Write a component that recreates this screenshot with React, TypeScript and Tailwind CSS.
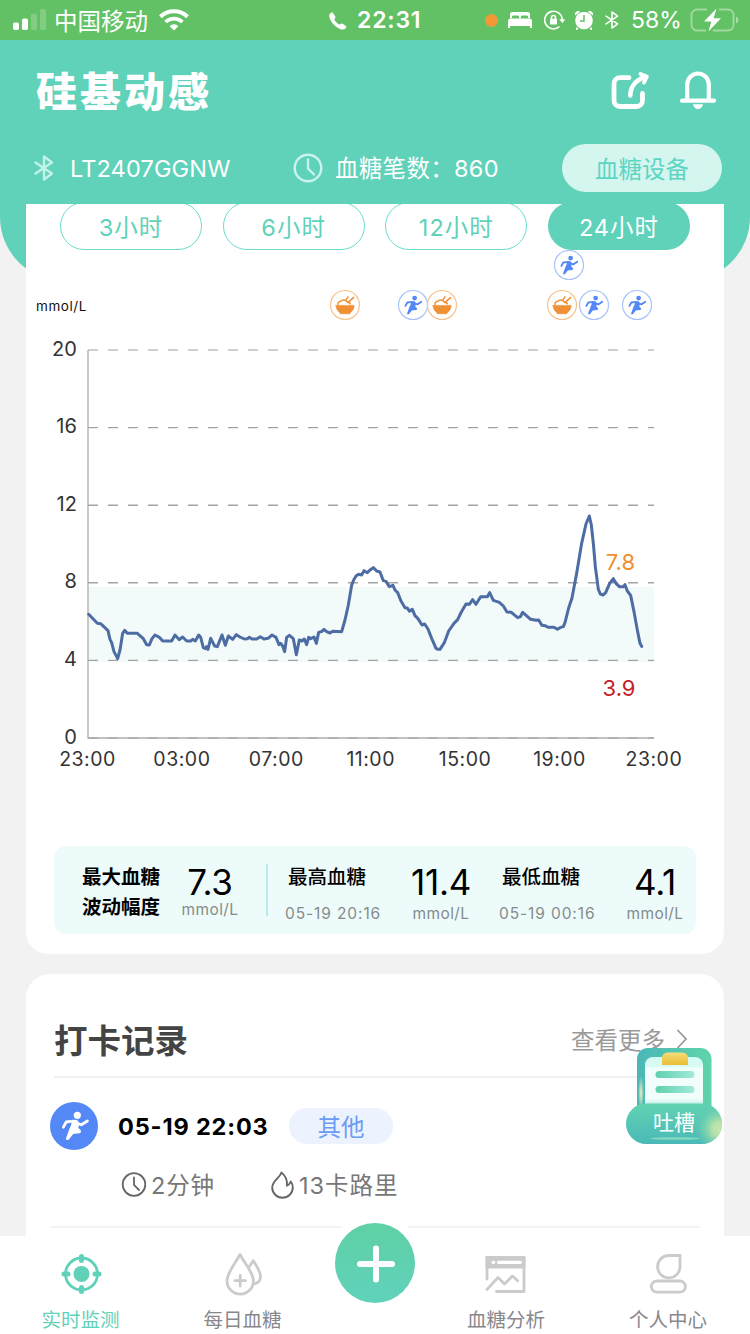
import type { ReactNode } from "react";

const RANGES = ["3小时", "6小时", "12小时", "24小时"];

const Y_TICKS = [20, 16, 12, 8, 4, 0];
const X_TICKS = ["23:00", "03:00", "07:00", "11:00", "15:00", "19:00", "23:00"];

const EVENTS: { kind: "sport" | "meal"; x: number; y: number }[] = [
  { kind: "sport", x: 569, y: 265 },
  { kind: "meal", x: 345, y: 305 },
  { kind: "sport", x: 413, y: 305 },
  { kind: "meal", x: 442, y: 305 },
  { kind: "meal", x: 562, y: 305 },
  { kind: "sport", x: 594, y: 305 },
  { kind: "sport", x: 637, y: 305 },
];

// glucose samples, in thirds of a pixel from (80, 500)
const TRACE =
  "26,343 52,370 62,371 84,392 90,418 95,428 102,455 113,476 120,450 128,400 134,391 142,400 172,400 190,416 200,434 208,435 216,416 225,405 238,412 248,423 275,423 285,405 298,419 308,411 320,423 332,423 338,418 346,423 356,405 362,412 370,443 376,446 380,440 384,448 392,415 404,438 412,440 426,405 436,436 445,408 458,418 469,404 480,411 493,417 502,416 508,412 516,417 530,417 541,410 552,417 564,415 576,405 588,412 597,434 602,430 608,438 614,455 620,412 628,406 640,416 649,464 658,420 666,423 673,417 680,434 686,412 692,416 702,411 709,430 716,397 726,394 732,388 740,395 750,399 758,394 785,395 795,360 805,315 815,256 821,240 828,228 836,223 845,225 852,212 862,218 870,210 " +
  "880,203 890,213 900,216 910,242 918,244 928,260 939,256 945,270 953,278 963,303 975,323 982,324 988,334 997,328 1005,347 1014,356 1026,375 1034,372 1044,387 1055,415 1068,445 1074,448 1080,448 1093,428 1106,393 1122,370 1133,359 1144,336 1158,312 1168,313 1178,299 1188,313 1202,290 1222,290 1229,278 1240,301 1258,307 1270,318 1281,336 1294,337 1313,353 1321,350 1328,337 1352,358 1368,361 1376,360 1386,376 1396,377 1404,382 1422,382 1432,388 1440,383 1450,380 1455,368 1466,324 1476,294 1490,220 1505,130 1518,72 1528,48 1534,75 1540,130 1546,200 1555,268 1561,282 1569,285 1577,278 1589,250 1600,236 1608,250 1618,260 1630,260 1635,254 1642,273 1652,286 1662,335 1672,390 1680,430 1685,439";

function Runner() {
  return (
    <g fill="currentColor" stroke="currentColor" strokeLinecap="round" strokeLinejoin="round">
      <circle cx="27.3" cy="13.3" r="3.6" stroke="none" />
      <path d="M13.4 25.2l2.8-5.2 4.4-.7" fill="none" strokeWidth="2.8" />
      <path d="M28 21.5l3.4 1.3 6-3.8" fill="none" strokeWidth="2.8" />
      <path
        d="M22.5 19l4 .2 1.8 3-1.5 4 3 3-.3.9-6.800.7-4.800 6h-.8l3.200-9 2.200-4.800z"
        strokeWidth="2.4"
      />
    </g>
  );
}

function EventMarker({ kind, x, y }: { kind: "sport" | "meal"; x: number; y: number }) {
  if (kind === "sport") {
    return (
      <g transform={`translate(${x - 15} ${y - 15})`} className="text-[#5588f7]">
        <circle cx="15" cy="15" r="14.5" fill="#fff" stroke="#a9c3fb" strokeWidth="1.2" />
        <g transform="translate(-1.4 -.7) scale(.66)">
          <Runner />
        </g>
      </g>
    );
  }
  return (
    <g transform={`translate(${x - 15} ${y - 15})`} stroke="#f09035" strokeLinecap="round">
      <circle cx="15" cy="15" r="14.5" fill="#fff" stroke="#f8c48d" strokeWidth="1.2" />
      <path d="M8 14.6c-.4-2 1-3.3 2.8-3.3 1.2-1.6 4-1.8 5.4-.4M15.5 10.6L18 6.8M17.8 12.6L23.6 7.6M16.5 11.5c1.6 0 3.2 1 3.8 2.4" fill="none" strokeWidth="1.5" />
      <path d="M6 15.4h18.2c-.2 3-1.4 5.4-3.4 6.8l-1 1.6h-9.4l-1-1.6C7.4 20.8 6.2 18.4 6 15.4z" fill="#f09035" strokeWidth=".6" />
    </g>
  );
}

function GlucoseChart() {
  return (
    <svg viewBox="26 250 698 540" className="block h-[540px] w-[698px] font-['Inter',sans-serif]">
      {EVENTS.map((e) => (
        <EventMarker key={`${e.x}-${e.y}`} {...e} />
      ))}
      <text x="36" y="311" fontSize="13.5" letterSpacing=".55" fill="#111">
        mmol/L
      </text>

      <rect x="88" y="587" width="566" height="75" fill="#f2fbfa" />
      {Y_TICKS.map((tick, i) => (
        <g key={tick}>
          <path
            d={`M88 ${350 + i * 77.6}H654`}
            stroke={i === 0 ? "#bebebe" : "#a2a2a2"}
            strokeWidth="1.4"
            strokeDasharray="10 10"
          />
          <text x="77" y={355.5 + i * 77.6} fontSize="20" letterSpacing=".1" textAnchor="end" fill="#333">
            {tick}
          </text>
        </g>
      ))}
      <path d="M88 350V738H654" fill="none" stroke="#adadad" strokeWidth="1.3" />
      {X_TICKS.map((tick, i) => (
        <text key={i} x={87.5 + i * 94.4} y="766" fontSize="19.5" letterSpacing=".5" textAnchor="middle" fill="#333">
          {tick}
        </text>
      ))}

      <polyline
        points={TRACE}
        transform="translate(80 500) scale(.33333)"
        fill="none"
        stroke="#4d6ca3"
        strokeWidth="9"
        strokeLinejoin="round"
        strokeLinecap="round"
      />
      <text x="635" y="570" fontSize="22" textAnchor="end" fill="#ef8f2f">
        7.8
      </text>
      <text x="635.5" y="696" fontSize="22" textAnchor="end" fill="#c32127">
        3.9
      </text>
    </svg>
  );
}

function BluetoothGlyph({ className, width }: { className: string; width: number }) {
  return (
    <svg viewBox="0 0 20 26" className={className} fill="none" stroke="currentColor" strokeWidth={width} strokeLinecap="round" strokeLinejoin="round">
      <path d="M1.5 7.5L18 18.5 10 24.5V1.5L18 7.5 1.5 18.5" />
    </svg>
  );
}

function StatusBar() {
  return (
    <div className="flex h-10 shrink-0 items-center bg-[#63c165] text-white">
      <svg viewBox="0 0 34 22" className="ml-[13px] h-[22px] w-[34px]" fill="#fff">
        <rect x="0" y="13.5" width="6" height="7.5" rx="1.8" />
        <rect x="9" y="9.5" width="6" height="11.5" rx="1.8" />
        <rect x="18" y="4.5" width="6" height="16.5" rx="1.8" opacity=".2" />
        <rect x="27" y="0" width="6" height="21" rx="1.8" opacity=".2" />
      </svg>
      <span className="ml-[7px] mt-0.5 w-[97px] whitespace-nowrap text-[23.5px]">中国移动</span>
      <svg viewBox="0 0 30 22" className="ml-2 h-[22px] w-[30px]" fill="none" stroke="#fff" strokeWidth="4">
        <path d="M1.5 7.8A19.5 19.5 0 0 1 28.5 7.8" />
        <path d="M6.6 13A12 12 0 0 1 23.4 13" strokeWidth="3.8" />
        <path d="M10.6 17.2a6.2 6.2 0 0 1 8.8 0L15 21.5z" fill="#fff" stroke="none" />
      </svg>
      <svg viewBox="0 0 18 18" className="ml-[140px] mt-px h-[18px] w-[18px]" fill="#fff">
        <path d="M.6 2.2C1.6.7 3.3.2 4 1l2.200 3.400c.5.8.3 1.500-.3 2.200-.6.700-.6 1.100-.1 1.900 1 1.500 2.300 2.800 3.800 3.700.7.400 1.200.4 1.900-.2.800-.6 1.400-.7 2.200-.2l2.900 1.900c1 .7.900 1.600-.2 2.900-1.800 1.900-5.200.9-8.500-1.300C3.500 12.400-1.100 5.500.6 2.200z" />
      </svg>
      <span className="ml-2.5 mt-px w-[66px] whitespace-nowrap font-['Inter',sans-serif] text-[23px] font-semibold tracking-[.8px]">
        22:31
      </span>
      <span className="ml-[62px] h-[13px] w-[13px] rounded-full bg-[#f09a37]" />
      <svg viewBox="0 0 24 16" className="ml-[10px] h-4 w-6" fill="#fff">
        <path d="M2 6V2.500A2.500 2.500 0 0 1 4.500 0h15A2.500 2.500 0 0 1 22 2.500V6h-2V5c0-1-.5-1.500-1.500-1.500h-4c-1 0-1.500.5-1.500 1.500v1h-2V5c0-1-.5-1.500-1.500-1.500h-4C4.500 3.500 4 4 4 5v1zM0 9A2.500 2.500 0 0 1 2.500 6.500h19A2.500 2.500 0 0 1 24 9V16h-2v-2H2v2H0z" />
      </svg>
      <svg viewBox="0 0 22 20" className="ml-3 h-5 w-[22px]" fill="none" stroke="#fff" strokeWidth="1.6">
        <path d="M18.3 9.5A8.8 8.8 0 1 0 15.5 16.5" />
        <path d="M15.3 9.2h6L18.3 13z" fill="#fff" stroke="none" />
        <rect x="6" y="8.8" width="7" height="5.7" rx=".8" fill="#fff" stroke="none" />
        <path d="M7.5 9V7.5a2 2 0 0 1 4 0V9" />
      </svg>
      <svg viewBox="0 0 20 20" className="ml-[8px] h-5 w-5" fill="#fff">
        <circle cx="10" cy="10.5" r="8.8" />
        <path d="M1 5.500Q.3 2 3.500 1q1.800-.4 2.800.8zM19 5.500q.7-3.500-2.500-4.500-1.800-.4-2.800.8zM2.500 17l2 1.500L3 20H1.800zM17.500 17l-2 1.500L17 20h1.200z" />
        <path d="M10 5v6H6" fill="none" stroke="#63c165" strokeWidth="1.5" />
      </svg>
      <BluetoothGlyph className="ml-[11px] h-5 w-[14px]" width={2.2} />
      <span className="ml-[12px] mt-px w-[52px] whitespace-nowrap font-['Inter',sans-serif] text-[23px]">58%</span>
      <svg viewBox="0 0 50 24" className="ml-[7px] h-6 w-[50px] shrink-0" fill="none">
        <path d="M17 1.5H7A5.5 5.5 0 0 0 1.5 7v10A5.5 5.5 0 0 0 7 22.5h9M29 1.5h9A5.5 5.5 0 0 1 43.5 7v10a5.5 5.5 0 0 1-5.5 5.5H23" stroke="#fff" strokeOpacity=".4" strokeWidth="1.8" />
        <path d="M46 8.5q2.4 1 2.4 3.5T46 15.5z" fill="#fff" fillOpacity=".45" />
        <path d="M26.5.5L14 13.6h7.3L18.5 23.5 31 10.2h-7.4z" fill="#fff" />
      </svg>
    </div>
  );
}

function Header() {
  return (
    <header className="h-[164px] shrink-0 bg-[#5fd2b9] text-white">
      <div className="flex h-[102px] items-center pl-[36px]">
        <h1 className="mt-[-2px] w-[200px] whitespace-nowrap text-[41px] font-black tracking-[3px]">硅基动感</h1>
        <svg viewBox="0 0 40 40" className="ml-[374px] h-10 w-10" fill="none" stroke="#fff" strokeWidth="4.8" strokeLinecap="round" strokeLinejoin="round">
          <path d="M19 6.700H10A6 6 0 0 0 4 12.700V29.500A6 6 0 0 0 10 35.500H26.500A6 6 0 0 0 32.500 29.500V22.500" />
          <path d="M20.300 24.500C20.500 15.500 26 9 34 6.500" strokeWidth="4.600" />
          <path d="M30.500 3L36.800 5.600 34 11.500" strokeWidth="4" />
        </svg>
        <svg viewBox="0 0 40 40" className="ml-[28px] h-10 w-10" fill="none" stroke="#fff" strokeWidth="4.2" strokeLinecap="round">
          <path d="M9.200 29V13.500a10.800 11 0 0 1 21.600 0V29" />
          <path d="M4 29.700H36" />
          <path d="M15 33.300h10q-1 4.700-5 4.700t-5-4.700z" fill="#fff" stroke="none" />
        </svg>
      </div>
      <div className="flex h-[52px] items-center pl-[34px]">
        <BluetoothGlyph className="h-[26px] w-5 text-[#c4f3ea]" width={2.4} />
        <span className="ml-4 mt-0.5 w-[164px] whitespace-nowrap font-['Inter',sans-serif] text-[23.5px] tracking-[.15px]">
          LT2407GGNW
        </span>
        <svg viewBox="0 0 30 30" className="ml-[59px] h-[30px] w-[30px]" fill="none" stroke="#c9f4ec" strokeWidth="2.4" strokeLinecap="round">
          <circle cx="15" cy="15" r="13.3" />
          <path d="M15 6.5v9l6 6" />
        </svg>
        <span className="ml-3 mt-0.5 w-[227px] whitespace-nowrap font-['Inter','Noto_Sans_CJK_SC',sans-serif] text-[23.5px] tracking-[.3px]">
          血糖笔数：860
        </span>
        <button className="h-12 w-40 rounded-full bg-[#d5f5ef] pt-0.5 text-[23.5px] text-[#5cd6c3]">血糖设备</button>
      </div>
    </header>
  );
}

function Reading({ label, time, value, className }: { label: string; time: string; value: string; className: string }) {
  return (
    <div className={`flex shrink-0 ${className}`}>
      <div className="w-[112px] whitespace-nowrap pt-[15px]">
        <div className="ml-[3px] text-[19.5px] font-medium leading-[30px]">{label}</div>
        <div className="mt-[11px] font-['Inter',sans-serif] text-[15.5px] leading-6 tracking-[.9px] text-[#858b8b]">{time}</div>
      </div>
      <div className="w-[88px] pt-[17px] text-center font-['Inter',sans-serif]">
        <div className="text-[35px] leading-[38px] tracking-[-.3px]">{value}</div>
        <div className="mt-px text-[15.5px] leading-6 tracking-[.4px] text-[#858b8b]">mmol/L</div>
      </div>
    </div>
  );
}

function Summary() {
  return (
    <div className="mx-7 mt-14 flex h-[88px] rounded-xl bg-[#eefbfb] pl-7 text-black">
      <div className="w-20 shrink-0 whitespace-nowrap pt-[15px] text-[19.5px] font-bold leading-[30px]">
        最大血糖
        <br />
        波动幅度
      </div>
      <div className="ml-[6px] w-[84px] shrink-0 pt-[19px] text-center font-['Inter',sans-serif]">
        <div className="text-[35px] leading-[34px] tracking-[-.3px]">7.3</div>
        <div className="text-[15.5px] leading-[22px] tracking-[.4px] text-[#858b8b]">mmol/L</div>
      </div>
      <div className="ml-[14px] mt-[18px] h-[52px] w-0.5 shrink-0 bg-[#b4eded]" />
      <Reading label="最高血糖" time="05-19 20:16" value="11.4" className="ml-[17px]" />
      <Reading label="最低血糖" time="05-19 00:16" value="4.1" className="ml-[14px]" />
    </div>
  );
}

function Records() {
  return (
    <section className="mx-[26px] mt-5 h-[400px] rounded-t-[24px] bg-white">
      <div className="flex h-[102px] items-center pl-[28px] pt-[28px]">
        <h2 className="w-[517px] whitespace-nowrap text-[33.5px] font-bold text-[#444]">打卡记录</h2>
        <span className="mt-0.5 w-[96px] whitespace-nowrap text-[23.5px] text-[#999]">查看更多</span>
        <svg viewBox="0 0 12 20" className="ml-[9px] h-5 w-3" fill="none" stroke="#999" strokeWidth="1.8">
          <path d="M1.5 1L10 10 1.5 19" />
        </svg>
      </div>
      <div className="mx-7 h-0.5 bg-[#f0f0f0]" />
      <div className="mt-6 flex items-center pl-6">
        <svg viewBox="0 0 48 48" className="h-12 w-12 rounded-full bg-[#5588f7] text-white">
          <Runner />
        </svg>
        <span className="ml-5 mt-0.5 w-[150px] whitespace-nowrap font-['Inter',sans-serif] text-[23.5px] font-bold tracking-[.85px] text-black">
          05-19 22:03
        </span>
        <span className="ml-[21px] flex h-9 w-[104px] items-center justify-center rounded-full bg-[#ecf3fe] pt-0.5 text-[23.5px] text-[#6b9bf5]">
          其他
        </span>
      </div>
      <div className="mt-[17px] flex h-9 items-center pl-[95px] font-['Inter','Noto_Sans_CJK_SC',sans-serif] text-[23.5px] tracking-[.8px] text-[#777]">
        <svg viewBox="0 0 26 26" className="h-[26px] w-[26px]" fill="none" stroke="#666" strokeWidth="1.8" strokeLinecap="round">
          <circle cx="13" cy="12.5" r="11.3" />
          <path d="M13 5.5v7.5l5 5" />
        </svg>
        <span className="ml-1 mt-0.5 w-[119px] whitespace-nowrap">2分钟</span>
        <svg viewBox="0 0 26 28" className="h-[28px] w-[26px]" fill="none" stroke="#666" strokeWidth="1.9" strokeLinejoin="round">
          <path d="M11.3 1.5C10.8 6 2.2 9.5 2.2 16.5a10.3 10.3 0 0 0 20.6 0c0-2.3-.7-4.2-2-6-.8 2-2 3.4-3.9 4.2.5-5.7-1.5-10.2-5.6-13.2z" />
        </svg>
        <span className="ml-[3px] mt-0.5 whitespace-nowrap tracking-[1px]">13卡路里</span>
      </div>
      <div className="mx-6 mt-[23px] h-0.5 bg-[#f3f3f3]" />
    </section>
  );
}

function NavItem({ label, active, children }: { label: string; active?: boolean; children: ReactNode }) {
  return (
    <div className="flex flex-col items-center pt-4">
      <svg
        viewBox="0 0 44 44"
        className={active ? "h-11 w-11 text-[#5fd2b9]" : "h-11 w-11 text-[#cbcbcb]"}
        fill="none"
        stroke="currentColor"
        strokeWidth="2.8"
        strokeLinecap="round"
        strokeLinejoin="round"
      >
        {children}
      </svg>
      <span
        className={
          active
            ? "mt-2 whitespace-nowrap text-[19.5px] leading-[30px] text-[#5fd2b9]"
            : "mt-2 whitespace-nowrap text-[19.5px] leading-[30px] text-[#88888c]"
        }
      >
        {label}
      </span>
    </div>
  );
}

function BottomNav() {
  return (
    <nav className="relative grid h-[98px] shrink-0 grid-cols-[161px_163px_102px_160px_164px] bg-white">
      <NavItem label="实时监测" active>
        <circle cx="22.5" cy="22" r="16" />
        <circle cx="22.5" cy="22" r="8" fill="currentColor" stroke="none" />
        <path d="M22.5 4.5v4M22.5 35.5v4M5 22h4M36 22h4" strokeWidth="5" />
      </NavItem>
      <NavItem label="每日血糖">
        <path d="M19 2.5C14 12 6 20.5 6 29a13 13 0 0 0 26.4 0C32.4 20.5 24 12 19 2.5z" />
        <path d="M27.5 15.5c1.8-2.3 3.3-4.4 4.7-6.7 3.5 5.4 7.3 10.5 7.3 15.7 0 4-2.5 6.7-6.5 7.5" />
        <path d="M19.2 23.5v10.5M14 28.7h10.5" />
      </NavItem>
      <div className="flex justify-center">
        <div className="relative -top-[22px] flex h-[98px] w-[98px] shrink-0 items-center justify-center rounded-full bg-white">
          <div className="flex h-20 w-20 items-center justify-center rounded-full bg-linear-to-b from-[#60d0a5] to-[#60d2bb]">
            <svg viewBox="0 0 40 40" className="mt-0.5 h-10 w-10" stroke="#fff" strokeWidth="6" strokeLinecap="round">
              <path d="M21 4.5v31M5 20h32" />
            </svg>
          </div>
        </div>
      </div>
      <NavItem label="血糖分析">
        <path d="M3 27V5.5h37v34H12.5" />
        <rect x="1.6" y="4.1" width="39.8" height="12.5" fill="currentColor" stroke="none" rx="1" />
        <path d="M9 10.3h.8M14.5 10.3h22" stroke="#fff" strokeWidth="3.2" />
        <path d="M3 37.5L14 25.500l6.500 6.500 8-8 5.200 4.800" />
      </NavItem>
      <NavItem label="个人中心">
        <path d="M22.5 3.5H34V14a11.2 11.2 0 1 1-11.5-10.5z" strokeLinejoin="miter" />
        <rect x="5.3" y="29" width="34.2" height="11.2" rx="5.6" />
      </NavItem>
    </nav>
  );
}

function FeedbackButton() {
  return (
    <button className="absolute left-[626px] top-[1048px] h-24 w-24">
      <svg viewBox="0 0 96 96" className="block h-24 w-24">
        <defs>
          <linearGradient id="board" x1="0" y1="0" x2="1" y2="0">
            <stop offset="0" stopColor="#4ab7b7" />
            <stop offset="1" stopColor="#60d4aa" />
          </linearGradient>
          <linearGradient id="paper" x1="0" y1="0" x2="0" y2="1">
            <stop offset="0" stopColor="#d4fbf4" />
            <stop offset=".2" stopColor="#d9fcf5" />
            <stop offset=".22" stopColor="#f1fefc" />
            <stop offset=".85" stopColor="#f1fefc" />
            <stop offset="1" stopColor="#b5e9e2" />
          </linearGradient>
          <linearGradient id="rule" x1="0" y1="0" x2="1" y2="0">
            <stop offset="0" stopColor="#5fd0ae" />
            <stop offset="1" stopColor="#a3eadb" />
          </linearGradient>
          <linearGradient id="clip" x1="0" y1="0" x2="0" y2="1">
            <stop offset="0" stopColor="#f7dc78" />
            <stop offset="1" stopColor="#e9bd35" />
          </linearGradient>
          <linearGradient id="pill" x1="0" y1="0" x2="0" y2="1">
            <stop offset="0" stopColor="#62d2b2" />
            <stop offset="1" stopColor="#4bb9b8" />
          </linearGradient>
          <radialGradient id="glow" gradientUnits="userSpaceOnUse" cx="94" cy="81" r="25">
            <stop offset="0" stopColor="#c8e7ac" />
            <stop offset=".3" stopColor="#b5e2ab" />
            <stop offset="1" stopColor="#66d0ae" stopOpacity="0" />
          </radialGradient>
          <radialGradient id="edge">
            <stop offset="0" stopColor="#f4efc0" />
            <stop offset="1" stopColor="#d4edc3" stopOpacity="0" />
          </radialGradient>
        </defs>
        <path d="M11 66V11A11 11 0 0 1 22 0h52.5a11 11 0 0 1 11 11v55z" fill="url(#board)" />
        <ellipse cx="15" cy="45" rx="3" ry="18" fill="url(#edge)" />
        <path d="M19 58V17a8 8 0 0 1 8-8h42a8 8 0 0 1 8 8v41z" fill="url(#paper)" />
        <path d="M36 17V10a5.5 5.5 0 0 1 5.5-5.5h15A5.5 5.5 0 0 1 62 10v7z" fill="url(#clip)" />
        <rect x="29.5" y="23" width="39" height="7" rx="3.5" fill="url(#rule)" />
        <rect x="29.5" y="38" width="39" height="7" rx="3.5" fill="url(#rule)" />
        <rect x="0" y="55.5" width="96" height="40.5" rx="20.2" fill="url(#pill)" />
        <rect x="0" y="55.5" width="96" height="40.5" rx="20.2" fill="url(#glow)" />
        <ellipse cx="49" cy="90.5" rx="25" ry="1.3" fill="#8fdec3" opacity=".8" />
        <text x="48" y="82" fontSize="21" textAnchor="middle" fill="#fff">
          吐槽
        </text>
      </svg>
    </button>
  );
}

export default function App() {
  return (
    <div className="relative flex h-[1334px] w-[750px] flex-col overflow-hidden bg-[#f2f2f2] font-['Noto_Sans_CJK_SC',sans-serif]">
      <StatusBar />
      <Header />
      <main className="relative min-h-0 flex-1 overflow-hidden">
        {/* curved tail of the header, behind the card */}
        <div className="absolute inset-x-0 top-0 h-[77px] rounded-b-[64px] bg-[#5fd2b9]" />
        <section className="relative mx-[26px] h-[750px] overflow-hidden rounded-b-[22px] bg-white">
          <div className="-mt-0.5 flex justify-between px-[34px]">
            {RANGES.map((range) => (
              <button
                key={range}
                className={
                  range === "24小时"
                    ? "h-12 w-[142px] rounded-full bg-[#5fd2b9] pt-[3px] font-['Inter','Noto_Sans_CJK_SC',sans-serif] text-[23.5px] tracking-[1px] text-white"
                    : "h-12 w-[142px] rounded-full border-[1.5px] border-[#6bdcce] pt-[3px] font-['Inter','Noto_Sans_CJK_SC',sans-serif] text-[23.5px] tracking-[1px] text-[#5fd2b9]"
                }
              >
                {range}
              </button>
            ))}
          </div>
          <GlucoseChart />
          <Summary />
        </section>
        <Records />
      </main>
      <BottomNav />
      <FeedbackButton />
    </div>
  );
}
